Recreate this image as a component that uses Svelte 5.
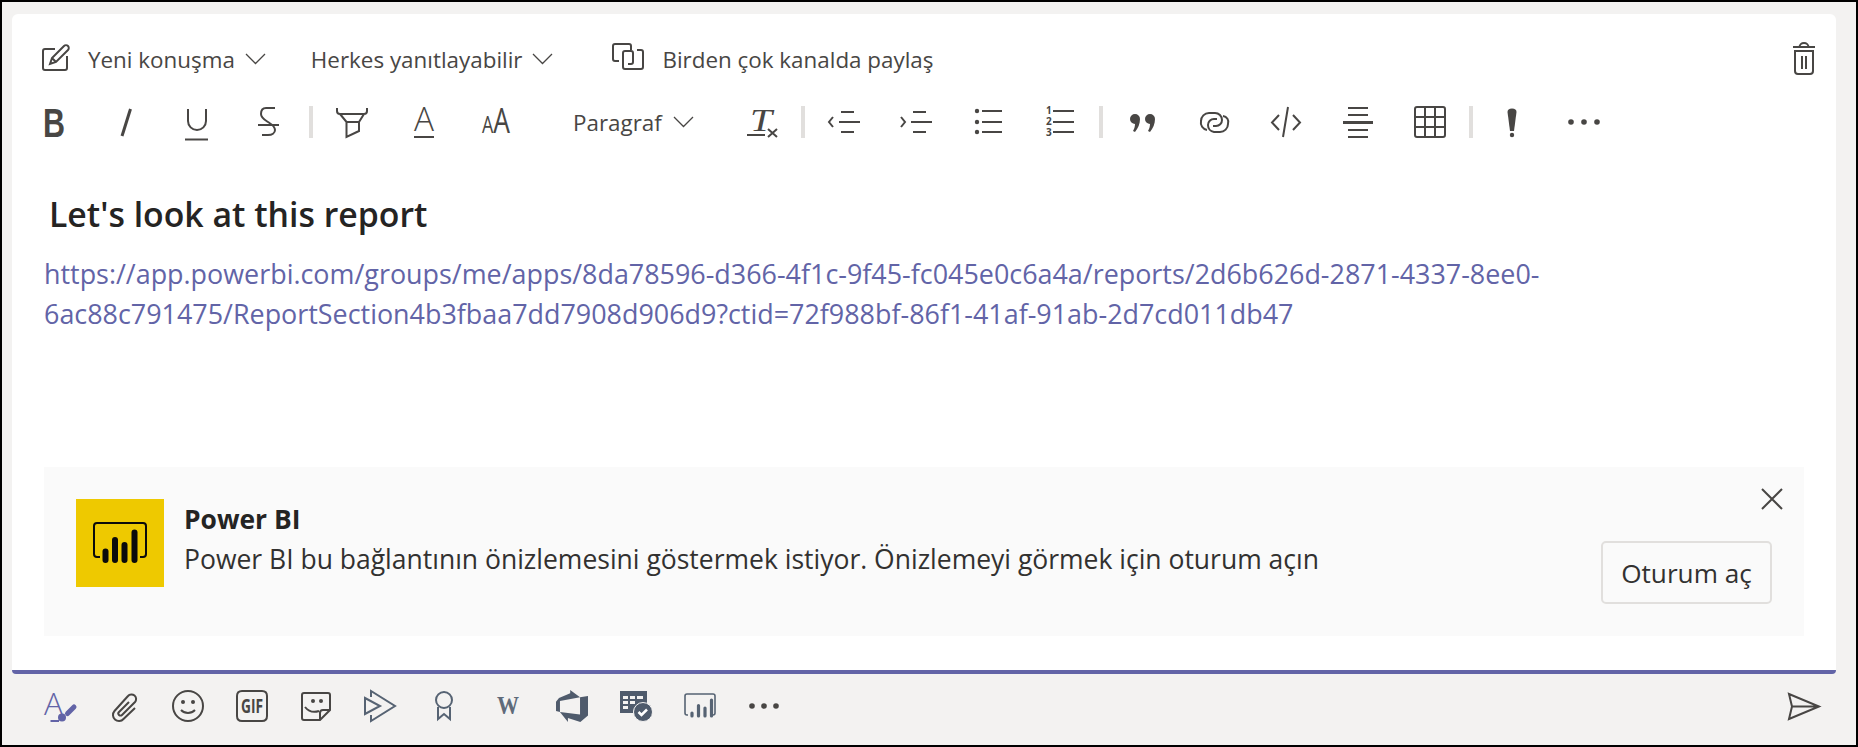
<script>
	const bars = [
		[29.5, 52.5],
		[39, 41],
		[48.5, 46],
		[58.5, 33.5]
	];
</script>

<div class="frame">
	<div class="card">
		<div class="head">
			<svg class="first" width="32" height="32" viewBox="0 0 32 32"><path d="M15 6H5a2 2 0 0 0-2 2v17a2 2 0 0 0 2 2h20a2 2 0 0 0 2-2V13" /><path d="M10 21l2-6L24 3c1-1 3-1 4 0s1 3 0 4L16 19zM12 15l4 4" /></svg>
			<span class="label one">Yeni konuşma</span>
			<svg class="chev" width="21" height="12" viewBox="0 0 21 12"><path d="M1 1l9.5 9.5L20 1" /></svg>
			<span class="label two">Herkes yanıtlayabilir</span>
			<svg class="chev" width="21" height="12" viewBox="0 0 21 12"><path d="M1 1l9.5 9.5L20 1" /></svg>
			<svg class="share" width="32" height="32" viewBox="0 0 32 32"><path d="M7 18H3a2 2 0 0 1-2-2V3a2 2 0 0 1 2-2h14a2 2 0 0 1 2 2v4" /><path d="M25 7h4a2 2 0 0 1 2 2v15a2 2 0 0 1-2 2H13a2 2 0 0 1-2-2V10a2 2 0 0 1 2-2h6a2 2 0 0 1 2 2v9a2 2 0 0 1-2 2h-3" /></svg>
			<span class="label three">Birden çok kanalda paylaş</span>
			<svg class="trash" width="24" height="34" viewBox="0 0 24 34"><path d="M1 5h22M7.5 5a4.5 4 0 0 1 9 0M3 9h18v20a3 3 0 0 1-3 3H6a3 3 0 0 1-3-3zM10 14v13M14 14v13" /></svg>
		</div>

		<div class="tools">
			<span class="slot"><svg viewBox="0 0 32 32"><text class="bold" x="5" y="31" font-size="40" textLength="22" lengthAdjust="spacingAndGlyphs">B</text></svg></span>
			<span class="slot"><svg viewBox="0 0 32 32"><path class="w3" d="M20.5 3L12 30" /></svg></span>
			<span class="slot"><svg viewBox="0 0 32 32"><path d="M6 3v12a9 9 0 0 0 18 0V3" /><path d="M3 33.5h23" /></svg></span>
			<span class="slot"><svg viewBox="0 0 32 32"><path d="M21 2h-9c-4 0-5 3-5 6 0 4 4 6 7 8s7 4 7 8c0 3-3 5-7 5H8" /><path d="M4 19h21" /></svg></span>
			<i class="sep"></i>
			<span class="slot"><svg viewBox="0 0 32 32"><path d="M1 2v3a3 3 0 0 0 3 3h24a3 3 0 0 0 3-3V2M4 8l6.500 8h12.500V25l-12.500 6V16M23 16l5-8" /></svg></span>
			<span class="slot"><svg viewBox="0 0 32 32"><text class="thin" x="6" y="25" font-size="33" textLength="20" lengthAdjust="spacingAndGlyphs">A</text><path d="M6 31h20" /></svg></span>
			<span class="slot"><svg viewBox="0 0 32 32"><text class="plain" x="2" y="27" textLength="28" lengthAdjust="spacingAndGlyphs"><tspan font-size="23">A</tspan><tspan font-size="34">A</tspan></text></svg></span>
			<span class="para">
				<span class="label">Paragraf</span>
				<svg class="chev" width="21" height="12" viewBox="0 0 21 12"><path d="M1 1l9.5 9.5L20 1" /></svg>
			</span>
			<span class="slot"><svg viewBox="0 0 32 32"><text class="serif" x="4" y="25" font-size="32" textLength="22" lengthAdjust="spacingAndGlyphs">T</text><path d="M1 29h18M22 23l9 8M31 23l-9 8" /></svg></span>
			<i class="sep"></i>
			<span class="slot"><svg viewBox="0 0 32 32"><path d="M5 11l-4 5 4 5M13 6h13M11 16h21M13 26h13" /></svg></span>
			<span class="slot"><svg viewBox="0 0 32 32"><path d="M1 11l4 5-4 5M13 6h13M11 16h21M13 26h13" /></svg></span>
			<span class="slot"><svg viewBox="0 0 32 32"><path d="M10 5h20M10 16h20M10 26h20" /><g class="fill"><circle cx="5" cy="5" r="2.2" /><circle cx="5" cy="16" r="2.2" /><circle cx="5" cy="26" r="2.2" /></g></svg></span>
			<span class="slot"><svg viewBox="0 0 32 32"><path d="M9 5h21M9 16h21M9 26h21" /><text class="num" x="2" y="8" font-size="10">1</text><text class="num" x="2" y="19" font-size="10">2</text><text class="num" x="2" y="30" font-size="10">3</text></svg></span>
			<i class="sep"></i>
			<span class="slot"><svg viewBox="0 0 32 32"><g class="fill"><path d="M9 8a5 5 0 0 1 5 5c0 5-2 9-5 13l-2-1c1-2 2-4 2-7a5 5 0 0 1 0-10z" /><path d="M24 8a5 5 0 0 1 5 5c0 5-2 9-5 13l-2-1c1-2 2-4 2-7a5 5 0 0 1 0-10z" /></g></svg></span>
			<span class="slot"><svg viewBox="0 0 32 32"><path d="M9 24a7.5 7.5 0 0 1-6-9 8 8 0 0 1 8-8h6a7 7 0 0 1 7 7 6 6 0 0 1-6 6h-3" /><path d="M25 10a6 6 0 0 1 5 8 8 8 0 0 1-8 8h-6a7 7 0 0 1-6-7 6 6 0 0 1 6-6h3" /></svg></span>
			<span class="slot"><svg viewBox="0 0 32 32"><path d="M9 9l-7 7.5L9 24M23 9l7 7.5-7 7.5M18 1l-5 30" /></svg></span>
			<span class="slot"><svg viewBox="0 0 32 32"><path d="M6 2h20M6 9h20M6 24h20M6 31h20" /><path class="w3" d="M1 16.5h30" /></svg></span>
			<span class="slot"><svg viewBox="0 0 32 32"><path d="M3 1h26a2 2 0 0 1 2 2v26a2 2 0 0 1-2 2H3a2 2 0 0 1-2-2V3a2 2 0 0 1 2-2zM11 1v30M21 1v30M1 11h30M1 21h30" /></svg></span>
			<i class="sep"></i>
			<span class="slot"><svg viewBox="0 0 32 32"><g class="fill"><path d="M11.5 6a4.5 3.5 0 0 1 9 0L18 25h-4z" /><circle cx="16" cy="29" r="2.2" /></g></svg></span>
			<span class="slot"><svg viewBox="0 0 32 32"><g class="fill"><circle cx="3" cy="16" r="2.8" /><circle cx="16" cy="16" r="2.8" /><circle cx="29" cy="16" r="2.8" /></g></svg></span>
		</div>

		<div class="body">
			<h1>Let's look at this report</h1>
			<p class="link">https://app.powerbi.com/groups/me/apps/8da78596-d366-4f1c-9f45-fc045e0c6a4a/reports/2d6b626d-2871-4337-8ee0-<br />6ac88c791475/ReportSection4b3fbaa7dd7908d906d9?ctid=72f988bf-86f1-41af-91ab-2d7cd011db47</p>
		</div>

		<div class="preview">
			<div class="logo">
				<svg width="88" height="88" viewBox="0 0 88 88">
					<path class="frame-line" d="M24 58h-3a3 3 0 0 1-3-3V27a3 3 0 0 1 3-3h46a3 3 0 0 1 3 3v28a3 3 0 0 1-3 3h-3" />
					{#each bars as [x, y]}
						<line class="bar" x1={x} y1={y} x2={x} y2="61" />
					{/each}
				</svg>
			</div>
			<div class="info">
				<strong>Power BI</strong>
				<span>Power BI bu bağlantının önizlemesini göstermek istiyor. Önizlemeyi görmek için oturum açın</span>
			</div>
			<button class="signin">Oturum aç</button>
			<svg class="close" width="22" height="22" viewBox="0 0 22 22"><path d="M1 1l20 20M21 1L1 21" /></svg>
		</div>
	</div>
	<div class="accent"></div>

	<div class="foot">
		<span class="cell purple"><svg viewBox="0 0 32 32"><text class="thin tint" x="0" y="25" font-size="32" textLength="19" lengthAdjust="spacingAndGlyphs">A</text><path class="w5" d="M30 17l-6.5 6.5" /><circle class="tintfill" cx="18" cy="27.5" r="4" /><path d="M6.5 31H15" /></svg></span>
		<span class="cell"><svg viewBox="0 0 32 32"><path d="M27 18L15.5 29a6 6 0 0 1-9-8L20 6a4.5 4.5 0 0 1 7 6L14 25a2 2 0 0 1-3-3l10-10" /></svg></span>
		<span class="cell"><svg viewBox="0 0 32 32"><circle cx="16" cy="16" r="15" /><path d="M9 20c4 4 10 4 14 0" /><g class="fill"><circle cx="11" cy="12" r="2" /><circle cx="21" cy="12" r="2" /></g></svg></span>
		<span class="cell"><svg viewBox="0 0 32 32"><path d="M6 1h20c3 0 5 2 5 5v20c0 3-2 5-5 5H6c-3 0-5-2-5-5V6c0-3 2-5 5-5z" /><text class="gif" x="5" y="23" font-size="20" textLength="22" lengthAdjust="spacingAndGlyphs">GIF</text></svg></span>
		<span class="cell"><svg viewBox="0 0 32 32"><path d="M4 3h24a2 2 0 0 1 2 2v15L20 30H4a2 2 0 0 1-2-2V5a2 2 0 0 1 2-2zM20 30v-7a3 3 0 0 1 3-3h7M5 17c4 5 8 6 14 4" /><g class="fill"><circle cx="13" cy="11" r="2" /><circle cx="21" cy="11" r="2" /></g></svg></span>
		<span class="cell slate"><svg viewBox="0 0 32 32"><path d="M7 7V1l24 15L7 31v-6M1 8l15 8-15 8z" /></svg></span>
		<span class="cell slate"><svg viewBox="0 0 32 32"><circle cx="16" cy="10" r="8" /><path d="M10 17v12l6-5 6 5V17" /></svg></span>
		<span class="cell slate"><svg viewBox="0 0 32 32"><text class="wiki" x="5" y="24" font-size="26" textLength="22" lengthAdjust="spacingAndGlyphs">W</text></svg></span>
		<span class="cell slate"><svg viewBox="0 0 24 24"><path class="solid" d="M0 8.877L2.247 5.91l8.405-3.416V.022l7.37 5.393L2.966 8.338v8.225L0 15.707zm24-4.45v14.651l-5.753 4.9-9.303-3.057v3.056l-5.978-7.416 15.057 1.798V5.415z" /></svg></span>
		<span class="cell slate"><svg viewBox="0 0 32 32"><path class="solid" fill-rule="evenodd" d="M0 1h27v14h-8a9 9 0 0 0-6 8H0zM3 6v3h5V6zm7 0v3h5V6zm7 0v3h6V6zM3 11v3h5v-3zm7 0v3h5v-3zM3 16v3h5v-3z" /><circle class="solid" cx="23" cy="22" r="9.5" /><path class="tick" d="M18.5 22l3 3 5.5-5.5" /></svg></span>
		<span class="cell slate"><svg viewBox="0 0 32 32"><path class="w16" d="M4 25H3a2 2 0 0 1-2-2V6a2 2 0 0 1 2-2h26a2 2 0 0 1 2 2v17a2 2 0 0 1-2 2h-1" /><path class="w3r" d="M8 26v-3M14.5 26V15.5M21 26v-8M27.5 26V10" /></svg></span>
		<span class="cell"><svg viewBox="0 0 32 32"><g class="fill"><circle cx="4" cy="16" r="2.8" /><circle cx="16" cy="16" r="2.8" /><circle cx="28" cy="16" r="2.8" /></g></svg></span>
		<svg class="send" width="34" height="32" viewBox="0 0 34 32"><path d="M2 4l30 12.5L2 29l3-12.5zM5 16.5h27" /></svg>
	</div>
</div>

<style>
	:global(body) {
		margin: 0;
		background: #000;
	}

	.frame {
		box-sizing: border-box;
		height: 747px;
		border: 2px solid #000;
		background: #f3f2f1;
		padding: 12px 20px 0 10px;
		font-family: "Open Sans", "Noto Sans", sans-serif;
		color: #484644;
		display: flex;
		flex-direction: column;
	}

	svg {
		display: block;
		flex: none;
		overflow: visible;
	}

	svg path,
	svg line,
	svg circle {
		fill: none;
		stroke: #484644;
		stroke-width: 2;
	}

	svg .fill circle,
	svg .fill path {
		fill: #484644;
		stroke: none;
	}

	svg .w3 {
		stroke-width: 3;
	}

	svg .w5 {
		stroke-width: 5;
		stroke-linecap: round;
	}

	svg .w16 {
		stroke-width: 1.6;
	}

	svg .w3r {
		stroke-width: 3.2;
		stroke-linecap: round;
	}

	.chev path {
		stroke-width: 1.3;
	}

	.card {
		height: 656px;
		background: #fff;
		border-radius: 6px 6px 0 0;
		display: flex;
		flex-direction: column;
	}

	.accent {
		height: 4px;
		background: #6264a7;
		border-radius: 0 0 4px 4px;
	}

	.head {
		display: flex;
		align-items: center;
		height: 42px;
		margin-top: 24px;
		padding-left: 28px;
	}

	.label {
		font-size: 22.4px;
		white-space: nowrap;
	}

	.one {
		margin-left: 16px;
	}

	.head .chev {
		margin-left: 10px;
	}

	.two {
		margin-left: 45px;
	}

	.share {
		margin-left: 59px;
	}

	.three {
		margin-left: 18px;
	}

	.trash {
		margin-left: auto;
		margin-right: 20px;
	}

	.tools {
		display: flex;
		align-items: center;
		height: 32px;
		margin-top: 26px;
		padding-left: 6px;
	}

	.slot {
		width: 72px;
		flex: none;
		display: flex;
		justify-content: center;
	}

	.slot svg,
	.cell svg {
		width: 32px;
		height: 32px;
	}

	.sep {
		width: 4px;
		height: 32px;
		margin: 0 3px;
		background: #e1dfdd;
		flex: none;
	}

	.para {
		width: 194px;
		flex: none;
		box-sizing: border-box;
		padding-left: 41px;
		display: flex;
		align-items: center;
		gap: 11px;
	}

	text {
		font-family: "Open Sans", sans-serif;
		fill: #484644;
	}

	.bold {
		font-weight: 700;
		font-family: "Liberation Sans", sans-serif;
	}

	.thin {
		font-weight: 300;
	}

	.plain {
		font-weight: 400;
	}

	.serif {
		font-family: "Liberation Serif", serif;
		font-style: italic;
	}

	.num,
	.gif {
		font-weight: 700;
	}

	.wiki {
		font-family: "Liberation Serif", serif;
		font-weight: 700;
		fill: #5f6b7a;
	}

	.body {
		flex: 1;
		padding-left: 32px;
		min-height: 0;
	}

	h1 {
		margin: 54px 0 0 5px;
		font-size: 33.8px;
		line-height: 44px;
		font-weight: 600;
		color: #252423;
	}

	.link {
		margin: 18px 0 0;
		font-size: 26.9px;
		line-height: 40px;
		color: #6264a7;
		white-space: nowrap;
	}

	.preview {
		position: relative;
		display: flex;
		height: 169px;
		box-sizing: border-box;
		margin: 0 32px 34px;
		padding: 32px;
		background: #fafafa;
	}

	.logo {
		width: 88px;
		height: 88px;
		background: #eec900;
		flex: none;
	}

	.logo .frame-line,
	.logo .bar {
		stroke: #0b0b0b;
	}

	.logo .bar {
		stroke-width: 6;
		stroke-linecap: round;
	}

	.info {
		margin-left: 20px;
		display: flex;
		flex-direction: column;
		font-size: 26.5px;
		line-height: 40px;
		color: #323130;
		white-space: nowrap;
	}

	.info strong {
		color: #252423;
		font-weight: 700;
		font-size: 26.4px;
	}

	.signin {
		margin-left: auto;
		align-self: flex-end;
		width: 171px;
		height: 63px;
		font: 400 26.2px "Open Sans", sans-serif;
		color: #323130;
		background: #fafafa;
		border: 2px solid #e1dfdd;
		border-radius: 5px;
		padding: 0;
	}

	.close {
		position: absolute;
		top: 21px;
		right: 21px;
	}

	.foot {
		flex: 1;
		display: flex;
		align-items: center;
		padding-left: 16px;
		padding-right: 15px;
		padding-bottom: 7px;
	}

	.cell {
		width: 64px;
		flex: none;
		display: flex;
		justify-content: center;
	}

	.purple path,
	.purple circle {
		stroke: #6264a7;
	}

	.purple .tint {
		fill: #6264a7;
	}

	.purple .tintfill {
		fill: #6264a7;
		stroke: none;
	}

	.slate path,
	.slate circle {
		stroke: #566373;
	}

	.slate .solid {
		fill: #4f5b6c;
		stroke: none;
	}

	.slate circle.solid {
		stroke: #f3f2f1;
		stroke-width: 1;
		fill: #4f5b6c;
	}

	.slate .tick {
		stroke: #fff;
		stroke-width: 2.5;
	}

	.send {
		margin-left: auto;
	}
</style>
